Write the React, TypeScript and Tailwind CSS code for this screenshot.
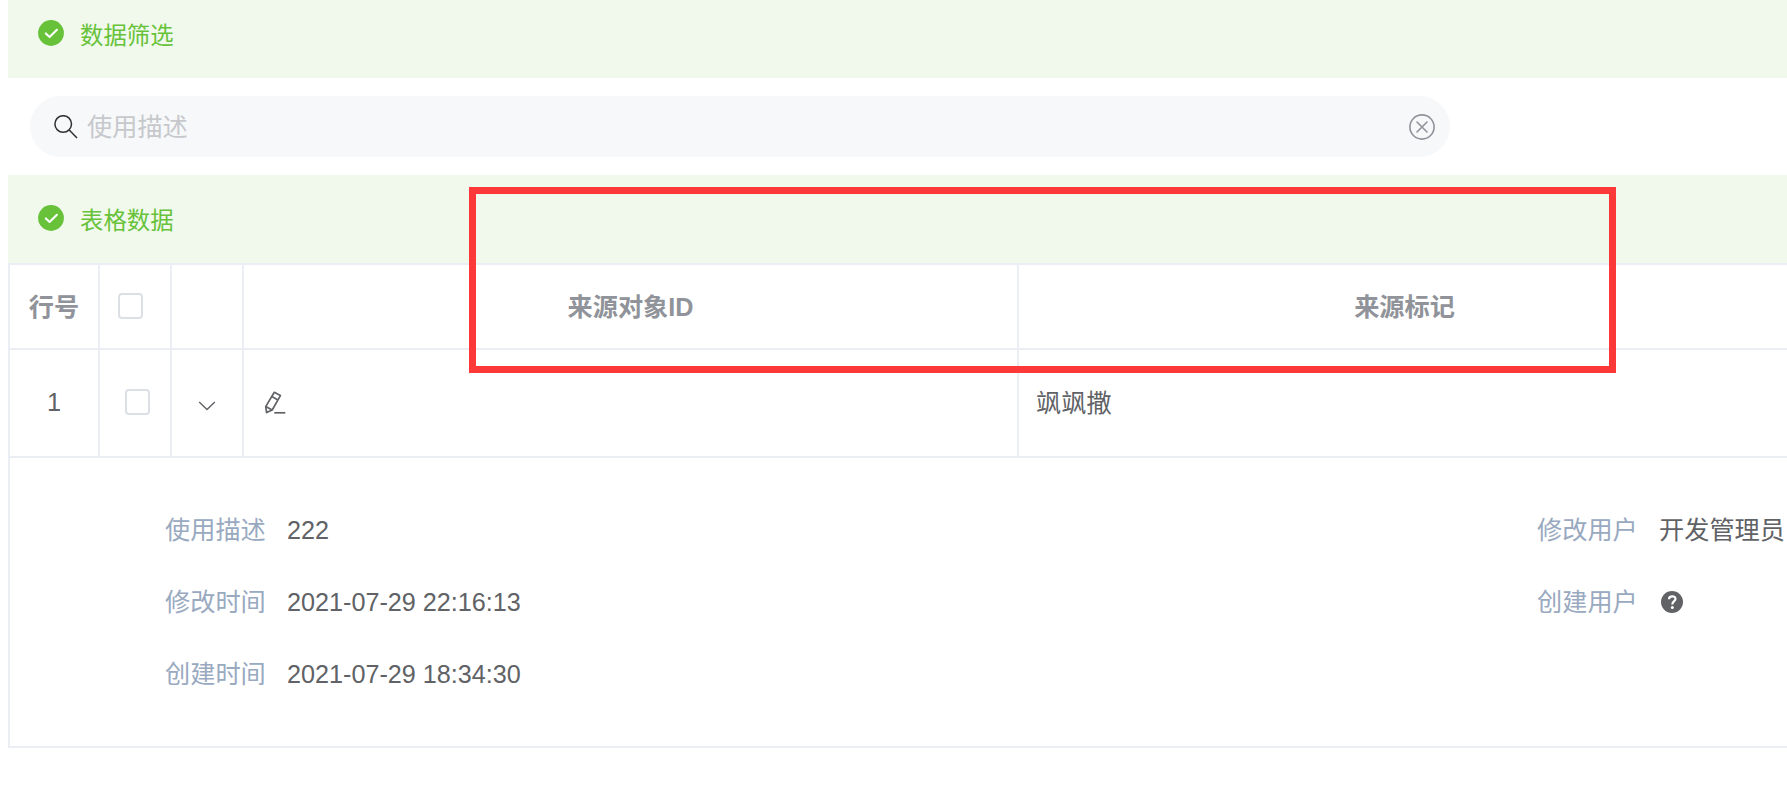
interface DetailItem {
  label: string;
  value?: string;
}

const LEFT_DETAILS: DetailItem[] = [
  { label: "使用描述", value: "222" },
  { label: "修改时间", value: "2021-07-29 22:16:13" },
  { label: "创建时间", value: "2021-07-29 18:34:30" },
];

const RIGHT_DETAILS: DetailItem[] = [
  { label: "修改用户", value: "开发管理员" },
  { label: "创建用户" },
];

function SuccessIcon() {
  return (
    <svg className="w-[26px] h-[26px] shrink-0" viewBox="0 0 26 26" fill="none">
      <circle cx="13" cy="13" r="12.9" fill="#67c23a" />
      <path d="M7.8 13.4 L11.6 17 L18.9 9.8" stroke="#fff" strokeWidth="2.1" strokeLinecap="round" strokeLinejoin="round" />
    </svg>
  );
}

function SearchIcon() {
  return (
    <svg className="w-6 h-6 shrink-0" viewBox="0 0 24 24" fill="none" stroke="#303133" strokeWidth="1.5">
      <circle cx="9.2" cy="9" r="8.3" />
      <path d="M15.2 15 L23 23" />
    </svg>
  );
}

function ClearIcon() {
  return (
    <svg className="w-[26px] h-[26px] shrink-0" viewBox="0 0 26 26" fill="none" stroke="#909399" strokeWidth="1.6">
      <circle cx="13" cy="13" r="12.1" />
      <path d="M8 8 L18 18 M18 8 L8 18" strokeLinecap="round" />
    </svg>
  );
}

function ArrowDownIcon() {
  return (
    <svg className="w-[18px] h-[10px]" viewBox="0 0 18 10" fill="none" stroke="#606266" strokeWidth="1.4">
      <path d="M1.2 1 L9 8.6 L16.8 1" />
    </svg>
  );
}

function EditIcon() {
  return (
    <svg className="w-[22px] h-[23px]" viewBox="0 0 22 23" fill="none" stroke="#606266" strokeWidth="1.7" strokeLinejoin="round">
      <path d="M10.3 1.3 L16.4 4.6 L8.2 19 L2.6 21.6 L1.7 15.6 Z" />
      <path d="M7.8 5.5 L14 9" />
      <path d="M1.7 15.6 L8.2 19" />
      <path d="M10.3 21.8 H21.3" />
    </svg>
  );
}

function QuestionIcon() {
  return (
    <svg className="w-[22px] h-[22px]" viewBox="0 0 22 22" fill="none">
      <circle cx="11" cy="11" r="11" fill="#606266" />
      <path d="M8 8.2 C8 4.4 14.5 4.3 14.5 8 C14.5 10.3 11.3 10.2 11.3 13.4" stroke="#fff" strokeWidth="2.2" />
      <circle cx="11.3" cy="16.4" r="1.5" fill="#fff" />
    </svg>
  );
}

function Checkbox() {
  return <span className="block w-[25px] h-[26px] rounded-[4px] border-2 border-[#dcdfe6] bg-white" />;
}

function AlertTitle({ title }: { title: string }) {
  return (
    <div className="flex items-start">
      <SuccessIcon />
      <span className="ml-4 text-[23.4px] leading-8 text-[#67c23a]">{title}</span>
    </div>
  );
}

function DetailRow({ label, value }: DetailItem) {
  return (
    <div className="flex h-[72px] items-center whitespace-nowrap">
      <span className="w-[122px] text-[#99a9bf]">{label}</span>
      {value ? <span>{value}</span> : <span className="ml-0.5"><QuestionIcon /></span>}
    </div>
  );
}

export default function App() {
  return (
    <div className="relative w-[1787px] h-[790px] overflow-hidden bg-white pl-2 text-[25.2px] leading-9 text-[#606266] font-['Liberation_Sans','Noto_Sans_CJK_SC',sans-serif]">
      {/* Filter */}
      <div className="h-[78px] bg-[#f0f9eb] pl-[30px] pt-5">
        <AlertTitle title="数据筛选" />
      </div>
      <div className="mt-[18px] ml-[22px] flex h-[61px] w-[1420px] items-center rounded-full bg-[#f7f8fa] pl-6 pr-[15px]">
        <SearchIcon />
        <span className="ml-[9px] flex-1 text-[#c6c8cc]">使用描述</span>
        <ClearIcon />
      </div>

      {/* Table */}
      <div className="mt-[18px] h-[88px] bg-[#f0f9eb] pl-[30px] pt-[30px]">
        <AlertTitle title="表格数据" />
      </div>
      <div className="w-[1785px] border-2 border-[#ebeef5]">
        <div className="grid h-[85px] grid-cols-[90px_72px_72px_775px_771px] border-b-2 border-[#ebeef5] font-bold text-[#909399]">
          <div className="flex items-center justify-center border-r-2 border-[#ebeef5]">行号</div>
          <div className="flex items-center border-r-2 border-[#ebeef5] pb-px pl-[18px]">
            <Checkbox />
          </div>
          <div className="border-r-2 border-[#ebeef5]" />
          <div className="flex items-center justify-center border-r-2 border-[#ebeef5]">来源对象ID</div>
          <div className="flex items-center justify-center">来源标记</div>
        </div>
        <div className="grid h-[108px] grid-cols-[90px_72px_72px_775px_771px] border-b-2 border-[#ebeef5]">
          <div className="flex items-center justify-center border-r-2 border-[#ebeef5] pb-0.5">1</div>
          <div className="flex items-center border-r-2 border-[#ebeef5] pb-0.5 pl-[25px]">
            <Checkbox />
          </div>
          <div className="flex items-center justify-center border-r-2 border-[#ebeef5] pt-1.5 pr-px">
            <ArrowDownIcon />
          </div>
          <div className="flex items-center border-r-2 border-[#ebeef5] pb-0.5 pl-5">
            <EditIcon />
          </div>
          <div className="flex items-center pl-[17px]">飒飒撒</div>
        </div>

        {/* Expanded row */}
        <div className="flex h-[288px] pl-[155px] pt-9">
          <div className="w-[1372px] shrink-0">
            {LEFT_DETAILS.map((item) => (
              <DetailRow key={item.label} {...item} />
            ))}
          </div>
          <div className="shrink-0">
            {RIGHT_DETAILS.map((item) => (
              <DetailRow key={item.label} {...item} />
            ))}
          </div>
        </div>
      </div>

      {/* Highlight box over the header columns */}
      <div className="absolute left-[469px] top-[187px] h-[186px] w-[1147px] border-[7px] border-[#fc3838]" />
    </div>
  );
}
